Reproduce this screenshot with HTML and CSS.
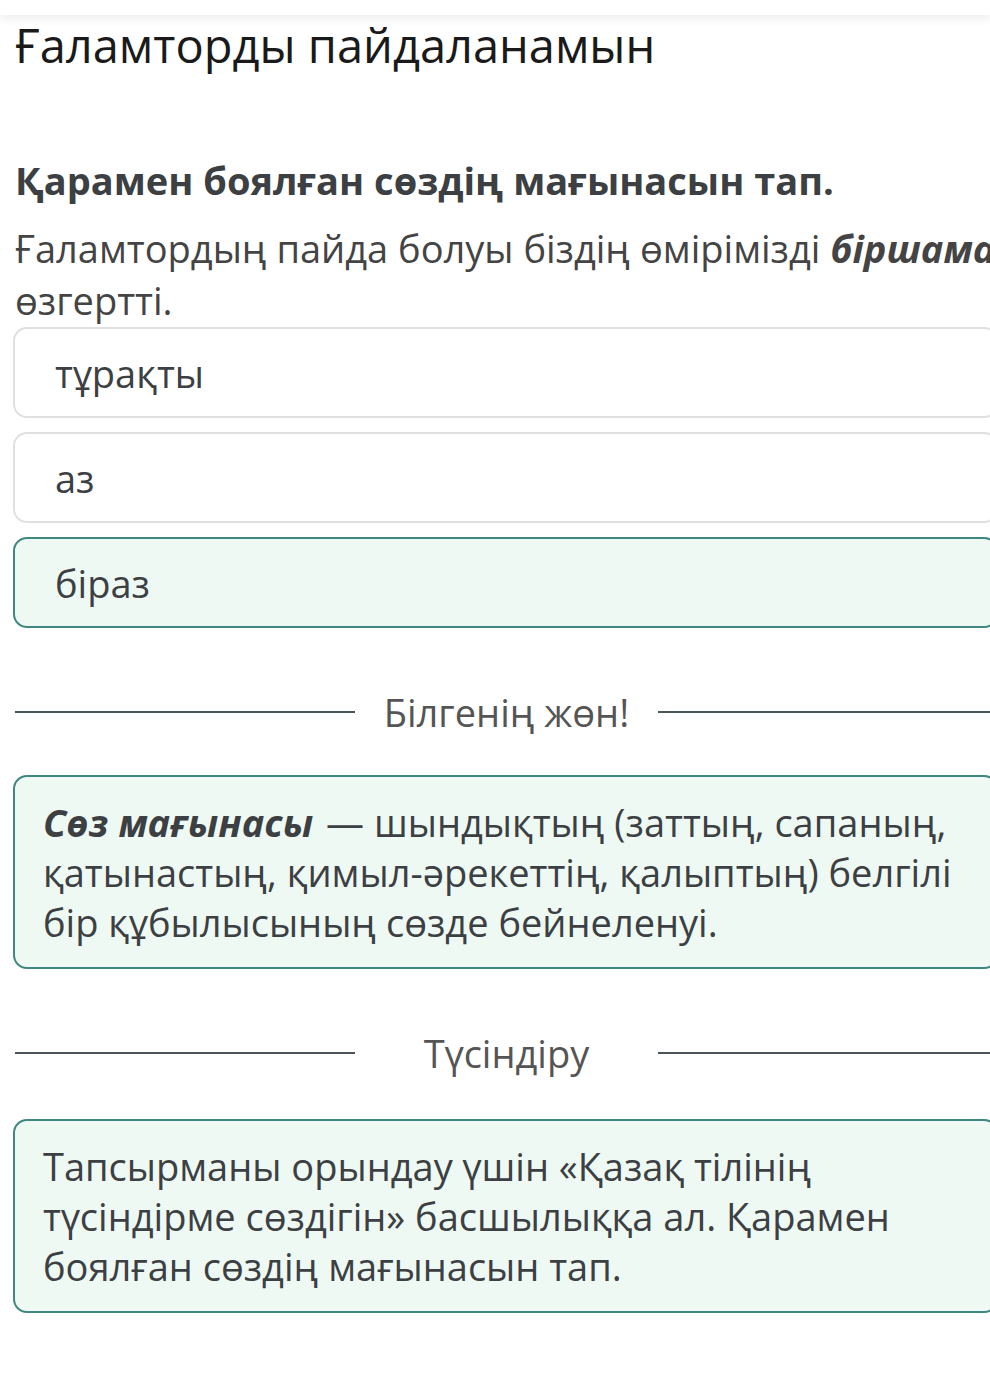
FILE: index.html
```html
<!DOCTYPE html>
<html lang="kk">
<head>
<meta charset="UTF-8">
<meta name="viewport" content="width=device-width, initial-scale=1.0">
<title>Ғаламторды пайдаланамын</title>
<link rel="stylesheet" href="styles.css">
</head>
<body>

<div class="topbar"></div>

<div class="page">
  <h1 class="lesson-title">Ғаламторды пайдаланамын</h1>

  <h2 class="task">Қарамен боялған сөздің мағынасын тап.</h2>

  <p class="sentence">Ғаламтордың пайда болуы біздің өмірімізді <b><i>біршама</i></b> өзгертті.</p>

  <div class="options">
    <div class="option">тұрақты</div>
    <div class="option">аз</div>
    <div class="option option-right">біраз</div>
  </div>

  <div class="divider"><span>Білгенің жөн!</span></div>

  <div class="info">
    <b class="term"><i>Сөз мағынасы</i></b> — шындықтың (заттың, сапаның, қатынастың, қимыл-әрекеттің, қалыптың) белгілі бір құбылысының сөзде бейнеленуі.
  </div>

  <div class="divider divider-second"><span>Түсіндіру</span></div>

  <div class="info info-second">
    Тапсырманы орындау үшін «Қазақ тілінің түсіндірме сөздігін» басшылыққа ал. Қарамен боялған сөздің мағынасын тап.
  </div>
</div>

</body>
</html>
```

FILE: styles.css
```css
html {
  overflow-x: hidden;
}
body {
  font-family: "Open Sans", "Noto Sans", sans-serif;
  margin: 0;
  background-color: #fff;
  color: #3c4043;
}
.topbar {
  height: 15px;
  background-color: #fff;
  box-shadow: 0 4px 10px rgba(0, 0, 0, 0.07);
}
.page {
  width: 985px;
  padding-left: 13px;
}
.lesson-title {
  margin: 0;
  padding-left: 2px;
  font-size: 47px;
  font-weight: 400;
  line-height: 60px;
  color: #1a1a1a;
}
.task {
  margin: 80px 0 0 2px;
  font-size: 38px;
  font-weight: 700;
  line-height: 50px;
  color: #3c4043;
}
.sentence {
  margin: 17px 0 0 2px;
  width: 1000px;
  font-size: 38px;
  line-height: 52px;
  color: #444;
}
.options {
  margin-top: 1px;
  display: flex;
  flex-direction: column;
  gap: 14px;
}
.option {
  height: 87px;
  display: flex;
  align-items: center;
  padding-left: 40px;
  border: 2px solid #e0e0e0;
  border-radius: 14px;
  font-size: 38px;
  color: #3c4043;
}
.option-right {
  background-color: #eef9f4;
  border-color: #3e8880;
}
.divider {
  margin-top: 58px;
  display: flex;
  align-items: center;
  font-size: 38px;
  line-height: 52px;
  color: #555;
}
.divider::before {
  content: "";
  width: 340px;
  margin-left: 2px;
  height: 2px;
  background-color: #4b5456;
}
.divider::after {
  content: "";
  flex: 1;
  height: 2px;
  background-color: #4b5456;
}
.divider span {
  width: 303px;
  text-align: center;
}
.divider-second {
  margin-top: 58px;
}
.info {
  margin-top: 37px;
  padding: 20px 30px 20px 28px;
  background-color: #eef9f4;
  border: 2px solid #3e8880;
  border-radius: 14px;
  font-size: 38px;
  line-height: 50px;
  color: #3c4043;
}
.term {
  padding-right: 3px;
}
.info-second {
  margin-top: 40px;
}
```
